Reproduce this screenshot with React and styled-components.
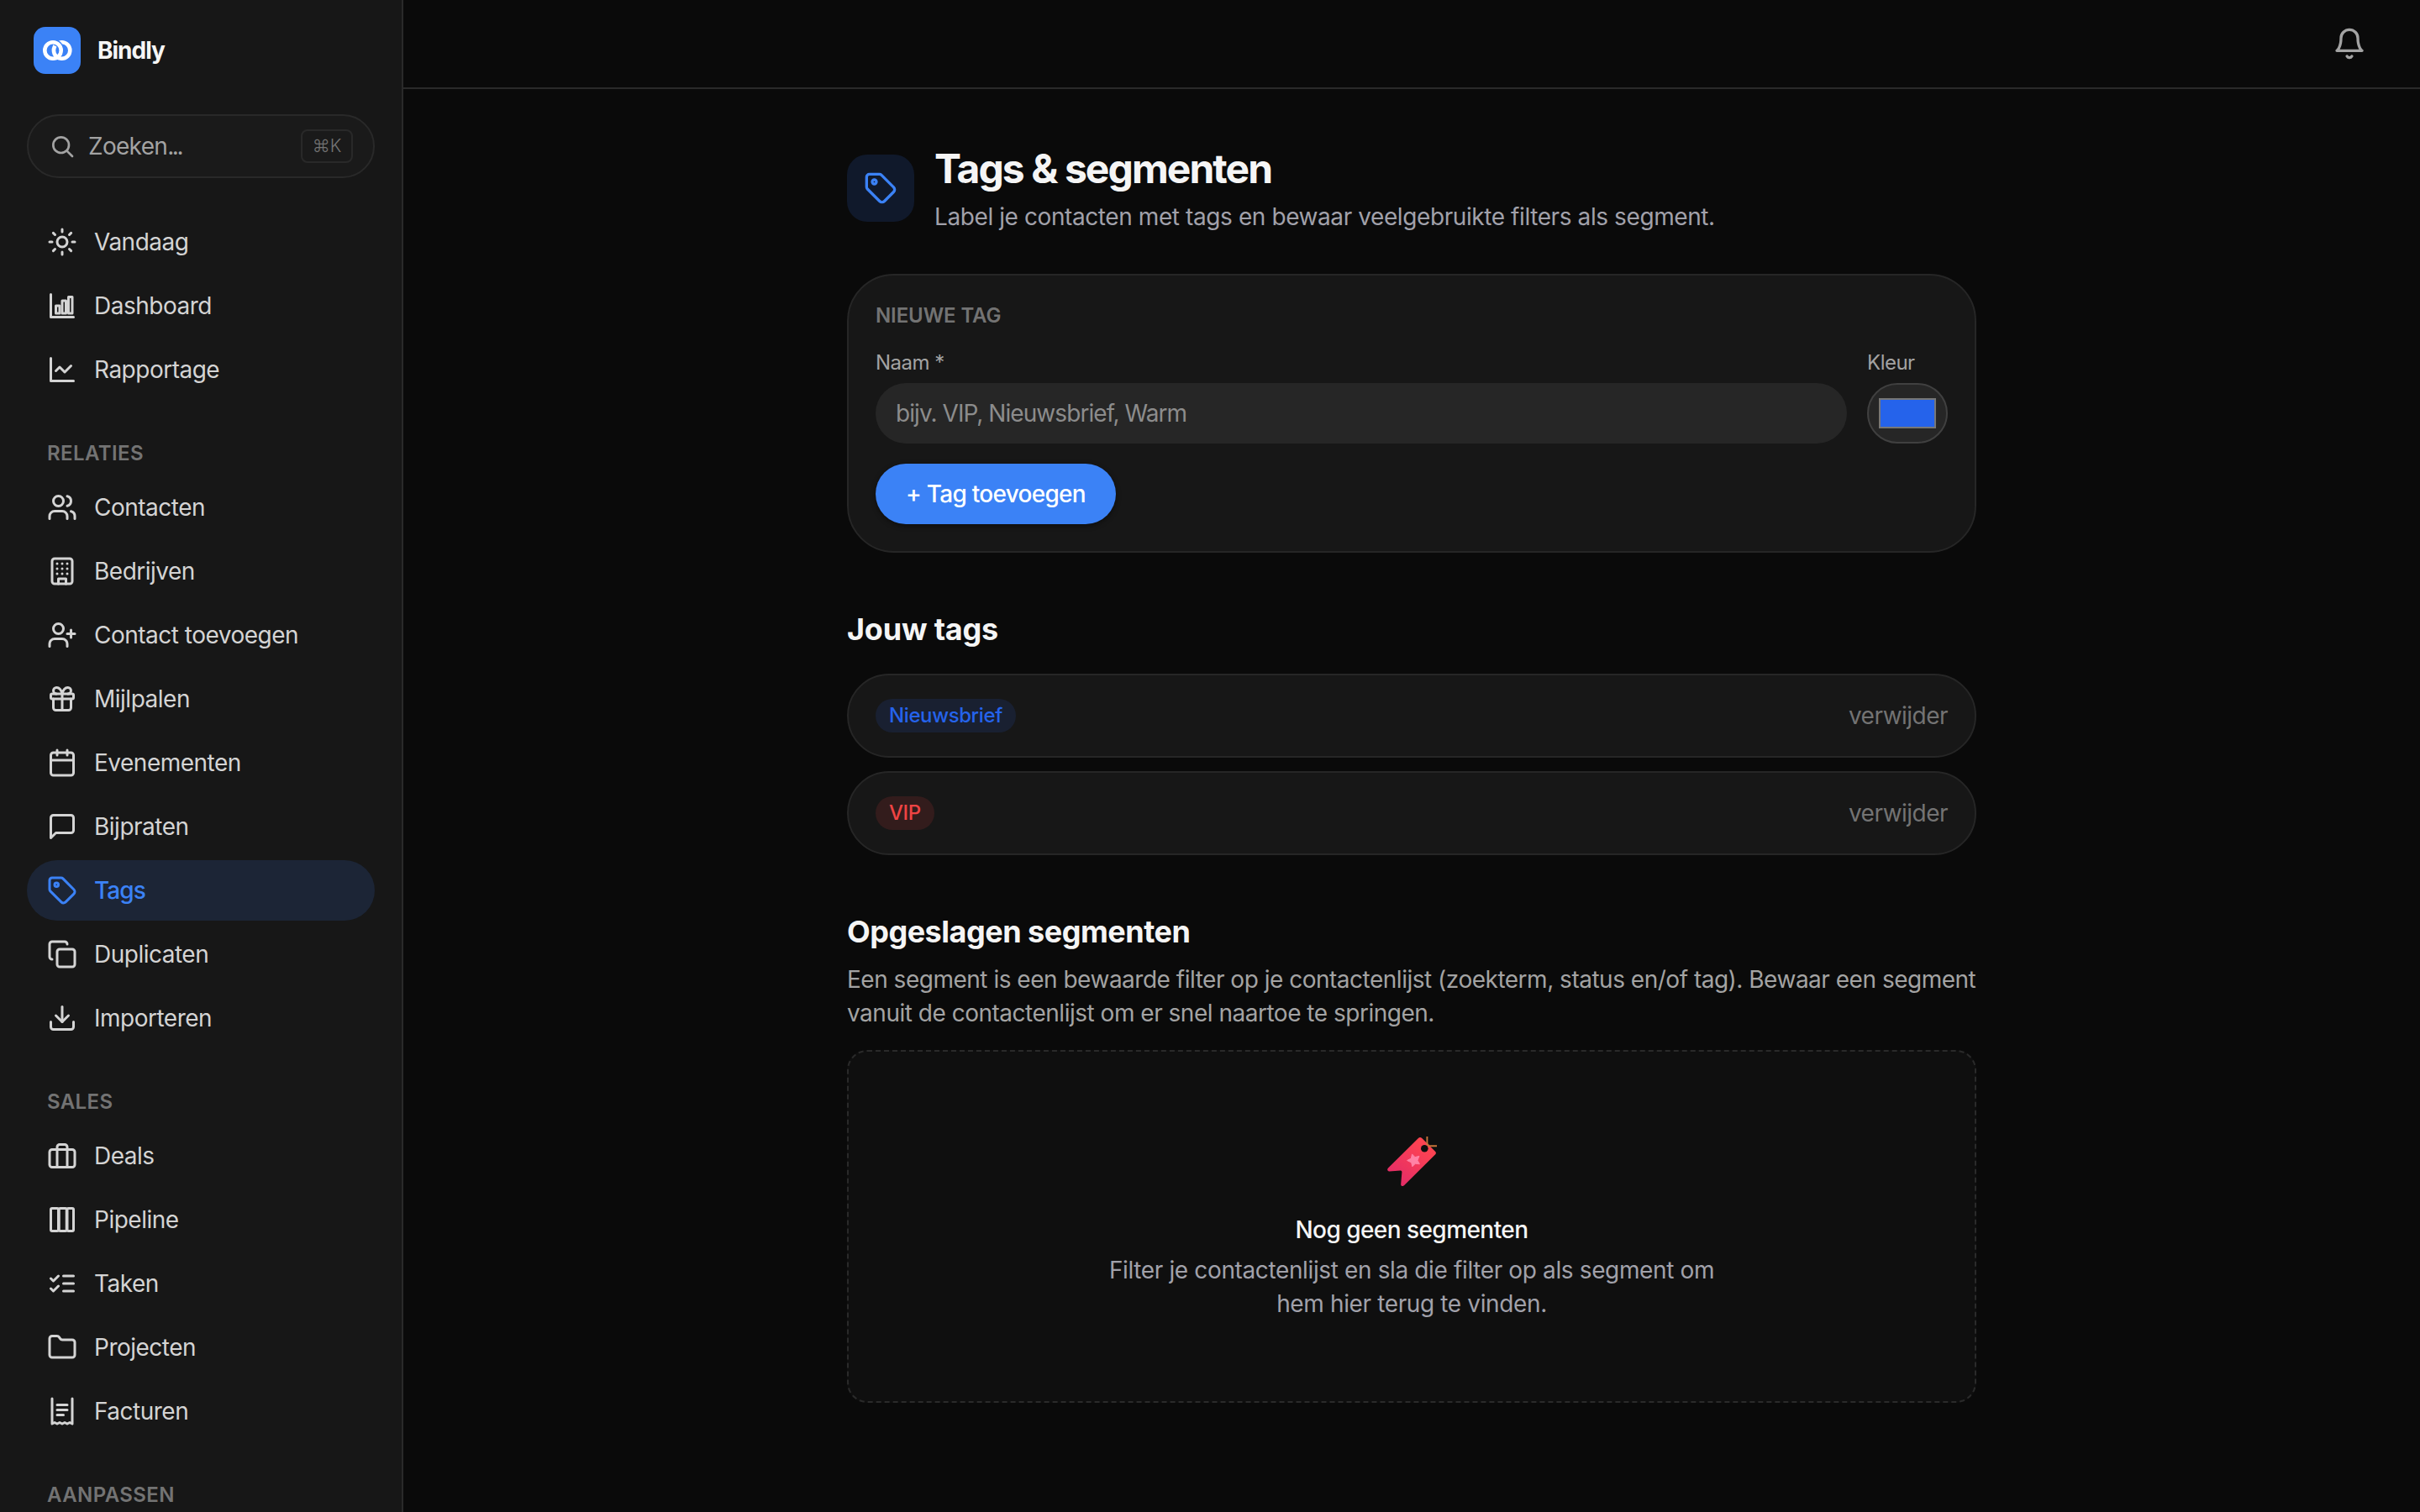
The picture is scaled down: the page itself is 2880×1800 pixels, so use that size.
import React from 'react';
import styled, { createGlobalStyle } from 'styled-components';
import { Users, UserPlus, Gift, Calendar, Copy, Download, Folder } from 'lucide-react';

const GlobalStyle = createGlobalStyle`
  * {
    box-sizing: border-box;
  }
  body {
    margin: 0;
    background: #0a0a0a;
    color: #f5f5f5;
    font-family: Inter, sans-serif;
    font-size: 28px;
    line-height: 40px;
    letter-spacing: -0.46px;
  }
  h1, h2, p {
    margin: 0;
  }
  button, input {
    font: inherit;
    letter-spacing: inherit;
  }
`;

const Layout = styled.div`
  display: flex;
  height: 1800px;
  overflow: hidden;
`;

const Sidebar = styled.aside`
  width: 480px;
  flex-shrink: 0;
  padding: 32px 32px 0;
  background: #171717;
  border-right: 2px solid #2a2a2a;
  overflow: hidden;
`;

const Brand = styled.div`
  display: flex;
  align-items: center;
  gap: 20px;
  padding-left: 8px;
  height: 56px;
  font-weight: 650;
  letter-spacing: -1px;
`;

const BrandLogo = styled.div`
  width: 56px;
  height: 56px;
  border-radius: 14px;
  background: #3b82f6;
  overflow: hidden;
`;

const SearchButton = styled.button`
  display: flex;
  align-items: center;
  gap: 15px;
  width: 414px;
  height: 76px;
  margin: 48px 0 40px;
  padding: 0 24px;
  background: #1a1a1a;
  border: 2px solid #292929;
  border-radius: 38px;
  color: #a3a3a3;
`;

const SearchLabel = styled.span`
  flex: 1;
  text-align: left;
  letter-spacing: -0.7px;
`;

const Dots = styled.span`
  letter-spacing: -2.4px;
`;

const Kbd = styled.kbd`
  display: flex;
  align-items: center;
  justify-content: center;
  width: 62px;
  height: 40px;
  border: 2px solid #292929;
  border-radius: 8px;
  color: #737373;
  font-family: Inter, sans-serif;
  font-size: 21px;
  font-weight: 300;
  letter-spacing: 0;
`;

const Nav = styled.nav`
  display: flex;
  flex-direction: column;
  gap: 4px;
  width: 414px;
`;

const NavHeading = styled.div`
  height: 92px;
  padding: 48px 24px 12px;
  color: #737373;
  font-size: 24px;
  font-weight: 600;
  line-height: 32px;
  letter-spacing: 0.4px;
`;

const NavItem = styled.a`
  display: flex;
  align-items: center;
  gap: 20px;
  height: 72px;
  padding: 0 24px;
  border-radius: 36px;
  background: ${p => (p.$active ? '#1c2536' : 'transparent')};
  color: ${p => (p.$active ? '#3b82f6' : '#d4d4d4')};
  font-weight: ${p => (p.$active ? 500 : 400)};
  letter-spacing: ${p => (p.$active ? '-0.9px' : '-0.5px')};
`;

const Main = styled.main`
  flex: 1;
  display: flex;
  flex-direction: column;
`;

const Topbar = styled.header`
  display: flex;
  align-items: center;
  justify-content: flex-end;
  height: 106px;
  padding-right: 64px;
  border-bottom: 2px solid #2a2a2a;
  color: #a3a3a3;
`;

const Content = styled.div`
  width: 1344px;
  margin: 0 auto;
  padding-top: 64px;
`;

const PageHeader = styled.div`
  display: flex;
  align-items: center;
  gap: 24px;
  margin-bottom: 48px;
`;

const PageIcon = styled.div`
  display: flex;
  align-items: center;
  justify-content: center;
  width: 80px;
  height: 80px;
  border-radius: 24px;
  background: #10192b;
  color: #3b82f6;
`;

const PageTitle = styled.h1`
  margin-bottom: 6px;
  font-size: 48px;
  font-weight: 650;
  line-height: 62px;
  letter-spacing: -1.95px;
`;

const Muted = styled.p`
  color: ${p => (p.$cool ? '#a1a1aa' : '#a3a3a3')};
  letter-spacing: ${p => p.$tracking || '-0.41px'};
  white-space: nowrap;
`;

const Card = styled.section`
  padding: 32px;
  border: 2px solid #262626;
  border-radius: 56px;
  background: #171717;
`;

const CardHeading = styled.div`
  margin-bottom: 24px;
  color: #737373;
  font-size: 24px;
  font-weight: 600;
  line-height: 32px;
  letter-spacing: -0.1px;
`;

const FormRow = styled.div`
  display: flex;
  gap: 24px;
  margin-bottom: 24px;
`;

const Field = styled.label`
  display: flex;
  flex-direction: column;
  gap: 8px;
  flex: ${p => (p.$grow ? 1 : 'none')};
  color: #a3a3a3;
  font-size: 24px;
  line-height: 32px;
  letter-spacing: -0.5px;
`;

const TextInput = styled.input`
  height: 72px;
  padding: 0 24px;
  border: 0;
  border-radius: 36px;
  background: #262626;
  color: #f5f5f5;
  font-size: 28px;
  letter-spacing: -0.94px;
  &::placeholder {
    color: #8c8c8c;
    opacity: 1;
  }
`;

const ColorInput = styled.span`
  display: flex;
  align-items: center;
  justify-content: center;
  width: 96px;
  height: 72px;
  border: 2px solid #404040;
  border-radius: 36px;
  background: #262626;
`;

const Swatch = styled.span`
  width: 68px;
  height: 36px;
  border: 2px solid #777777;
  background: #2563eb;
`;

const AddButton = styled.button`
  display: block;
  width: 286px;
  height: 72px;
  padding: 0;
  border: 0;
  border-radius: 36px;
  background: #3b82f6;
  box-shadow: 0 2px 6px rgba(0, 0, 0, 0.45);
  color: #fff;
  font-weight: 550;
  letter-spacing: -0.72px;
  white-space: nowrap;
`;

const SectionTitle = styled.h2`
  margin: 64px 0 ${p => p.$space}px;
  font-size: 36px;
  font-weight: 650;
  line-height: 54px;
  letter-spacing: ${p => p.$tracking || '-0.5px'};
`;

const TagList = styled.div`
  display: flex;
  flex-direction: column;
  gap: 16px;
`;

const TagRow = styled.div`
  display: flex;
  align-items: center;
  justify-content: space-between;
  height: 100px;
  padding: 0 32px;
  border: 2px solid #262626;
  border-radius: 50px;
  background: #171717;
`;

const Chip = styled.span`
  height: 40px;
  padding: 0 16px;
  border-radius: 20px;
  background: ${p => p.$bg};
  color: ${p => p.$color};
  font-size: 24px;
  font-weight: 500;
  letter-spacing: -0.4px;
`;

const RemoveButton = styled.button`
  padding: 0;
  border: 0;
  background: none;
  color: #737373;
  letter-spacing: -0.52px;
`;

const EmptyState = styled.div`
  display: flex;
  flex-direction: column;
  align-items: center;
  height: 420px;
  margin-top: 24px;
  padding: 96px 0;
  border: 2px dashed #2a2a2a;
  border-radius: 24px;
  background: #0f0f0f;
  text-align: center;
`;

const EmptyArt = styled.div`
  height: 72px;
  padding: 5px 0 0 2px;
  margin-bottom: 24px;
  line-height: 0;
`;

const EmptyTitle = styled.p`
  margin-bottom: 8px;
  font-weight: 550;
  letter-spacing: -0.55px;
`;

const Svg = ({ size = 36, children }) => (
  <svg
    width={size}
    height={size}
    viewBox="0 0 24 24"
    fill="none"
    stroke="currentColor"
    strokeWidth="2"
    strokeLinecap="round"
    strokeLinejoin="round"
  >
    {children}
  </svg>
);

const lucide = Icon => () => <Icon size={36} strokeWidth={2} />;

const SunIcon = () => (
  <Svg>
    <circle cx="12" cy="12" r="4" />
    <path d="M12 2v2M12 20v2M4.93 4.93l1.41 1.41M17.66 17.66l1.41 1.41M2 12h2M20 12h2M6.34 17.66l-1.41 1.41M19.07 4.93l-1.41 1.41" />
  </Svg>
);

const BarsIcon = () => (
  <Svg>
    <path d="M3 3v18h18" />
    <rect x="7" y="12" width="3" height="6" />
    <rect x="12" y="8" width="3" height="10" />
    <rect x="17" y="5" width="3" height="13" />
  </Svg>
);

const TrendIcon = () => (
  <Svg>
    <path d="M3 3v18h18" />
    <path d="m7 13 3-3 4 4 5-5" />
  </Svg>
);

const BuildingIcon = () => (
  <Svg>
    <rect x="4" y="2" width="16" height="20" rx="2" />
    <path d="M9 22v-4h6v4" />
    <path d="M8 6h.01M12 6h.01M16 6h.01M8 10h.01M12 10h.01M16 10h.01M8 14h.01M12 14h.01M16 14h.01" />
  </Svg>
);

const MessageIcon = () => (
  <Svg>
    <path d="M21 15a2 2 0 0 1-2 2H7l-4 4V5a2 2 0 0 1 2-2h14a2 2 0 0 1 2 2z" />
  </Svg>
);

const TagIcon = ({ size }) => (
  <Svg size={size}>
    <path d="M12.586 2.586A2 2 0 0 0 11.172 2H4a2 2 0 0 0-2 2v7.172a2 2 0 0 0 .586 1.414l8.704 8.704a2.426 2.426 0 0 0 3.42 0l6.58-6.58a2.426 2.426 0 0 0 0-3.42z" />
    <circle cx="7.5" cy="7.5" r="1.5" />
  </Svg>
);

const BriefcaseIcon = () => (
  <Svg>
    <rect x="2" y="7" width="20" height="14" rx="2" />
    <path d="M16 21V5a2 2 0 0 0-2-2h-4a2 2 0 0 0-2 2v16" />
  </Svg>
);

const ColumnsIcon = () => (
  <Svg>
    <rect x="3" y="3" width="6" height="18" rx="1" />
    <rect x="9.5" y="3" width="6" height="18" rx="1" />
    <rect x="16" y="3" width="5" height="18" rx="1" />
  </Svg>
);

const ChecksIcon = () => (
  <Svg>
    <path d="m3 8 2 2 4-4M3 16l2 2 4-4M13 6h8M13 12h8M13 18h8" />
  </Svg>
);

const InvoiceIcon = () => (
  <Svg>
    <path d="M4 2v20l2-1 2 1 2-1 2 1 2-1 2 1 2-1 2 1V2" />
    <path d="M8 7h8M8 11h8M8 15h5" />
  </Svg>
);

const SearchIcon = () => (
  <Svg size={32}>
    <circle cx="11" cy="11" r="7" />
    <path d="m21 21-4.8-4.8" />
  </Svg>
);

const BellIcon = () => (
  <Svg size={40}>
    <path d="M6 8a6 6 0 0 1 12 0c0 7 3 9 3 9H3s3-2 3-9" />
    <path d="M10.3 21a1.94 1.94 0 0 0 3.4 0" />
  </Svg>
);

// two linked rings, the left one passes over the right one at the top
const Logo = () => (
  <BrandLogo>
    <svg width="56" height="56" viewBox="0 0 56 56" fill="none">
      <circle cx="33.6" cy="28" r="9.7" stroke="#fff" strokeWidth="4.6" />
      <path d="M24.7 18.4A9.7 9.7 0 0 1 32.4 26" stroke="#3b82f6" strokeWidth="7.4" />
      <circle cx="23" cy="28" r="9.7" stroke="#fff" strokeWidth="4.6" />
    </svg>
  </BrandLogo>
);

const BookmarkArt = () => (
  <svg width="60" height="60" viewBox="0 0 60 60" fill="none">
    <defs>
      <linearGradient id="ribbon" x1="48" y1="8" x2="12" y2="52" gradientUnits="userSpaceOnUse">
        <stop stopColor="#ff4550" />
        <stop offset="1" stopColor="#e52d66" />
      </linearGradient>
    </defs>
    <path
      d="M37.2 1.7 1 37.4C-.7 39.2.3 41.6 2.6 41.4L15.6 40.6Q17.6 40.5 17.4 42.5L16.2 56.6C16 59 18.4 59.8 20.2 58.1L57.2 21.3Q58.6 19.6 57.2 18L41 1.8Q39 .2 37.2 1.7Z"
      fill="url(#ribbon)"
    />
    <circle cx="44.3" cy="14.3" r="4.3" fill="#0f0f0f" />
    <path d="M47.4 0v8.5L49.5 11.2H59" stroke="#c6763a" strokeWidth="1.9" />
    <path
      d="M29.5 20.9 33 24.6 38 23.3 36 28.3 38.4 32.8 33.4 32.2 29.8 35.8 28.7 30.9 23.6 28.5 28.4 26.1Z"
      fill="#ff82a5"
      stroke="#ff82a5"
      strokeLinejoin="round"
    />
  </svg>
);

const groups = [
  {
    items: [
      ['Vandaag', SunIcon],
      ['Dashboard', BarsIcon],
      ['Rapportage', TrendIcon],
    ],
  },
  {
    title: 'RELATIES',
    items: [
      ['Contacten', lucide(Users)],
      ['Bedrijven', BuildingIcon],
      ['Contact toevoegen', lucide(UserPlus)],
      ['Mijlpalen', lucide(Gift)],
      ['Evenementen', lucide(Calendar)],
      ['Bijpraten', MessageIcon],
      ['Tags', TagIcon],
      ['Duplicaten', lucide(Copy)],
      ['Importeren', lucide(Download)],
    ],
  },
  {
    title: 'SALES',
    items: [
      ['Deals', BriefcaseIcon],
      ['Pipeline', ColumnsIcon],
      ['Taken', ChecksIcon],
      ['Projecten', lucide(Folder)],
      ['Facturen', InvoiceIcon],
    ],
  },
  { title: 'AANPASSEN', items: [] },
];

const tags = [
  { name: 'Nieuwsbrief', color: '#2563eb', bg: '#192031' },
  { name: 'VIP', color: '#ef4444', bg: '#331c1c' },
];

const App = () => (
  <Layout>
    <GlobalStyle />
    <Sidebar>
      <Brand>
        <Logo />
        <span>Bindly</span>
      </Brand>
      <SearchButton>
        <SearchIcon />
        <SearchLabel>Zoeken<Dots>...</Dots></SearchLabel>
        <Kbd>⌘K</Kbd>
      </SearchButton>
      {groups.map((group, i) => (
        <React.Fragment key={i}>
          {group.title && <NavHeading>{group.title}</NavHeading>}
          <Nav>
            {group.items.map(([label, Icon]) => (
              <NavItem key={label} $active={label === 'Tags'}>
                <Icon />
                <span>{label}</span>
              </NavItem>
            ))}
          </Nav>
        </React.Fragment>
      ))}
    </Sidebar>
    <Main>
      <Topbar>
        <BellIcon />
      </Topbar>
      <Content>
        <PageHeader>
          <PageIcon>
            <TagIcon size={40} />
          </PageIcon>
          <div>
            <PageTitle>Tags &amp; segmenten</PageTitle>
            <Muted $cool>Label je contacten met tags en bewaar veelgebruikte filters als segment.</Muted>
          </div>
        </PageHeader>

        <Card>
          <CardHeading>NIEUWE TAG</CardHeading>
          <FormRow>
            <Field $grow>
              Naam *
              <TextInput placeholder="bijv. VIP, Nieuwsbrief, Warm" />
            </Field>
            <Field>
              Kleur
              <ColorInput>
                <Swatch />
              </ColorInput>
            </Field>
          </FormRow>
          <AddButton>+ Tag toevoegen</AddButton>
        </Card>

        <SectionTitle $space={26} $tracking="-0.2px">Jouw tags</SectionTitle>
        <TagList>
          {tags.map(tag => (
            <TagRow key={tag.name}>
              <Chip $bg={tag.bg} $color={tag.color}>{tag.name}</Chip>
              <RemoveButton>verwijder</RemoveButton>
            </TagRow>
          ))}
        </TagList>

        <SectionTitle $space={10}>Opgeslagen segmenten</SectionTitle>
        <Muted $tracking="-0.49px">
          Een segment is een bewaarde filter op je contactenlijst (zoekterm, status en/of tag). Bewaar een segment
          <br />
          vanuit de contactenlijst om er snel naartoe te springen.
        </Muted>
        <EmptyState>
          <EmptyArt>
            <BookmarkArt />
          </EmptyArt>
          <EmptyTitle>Nog geen segmenten</EmptyTitle>
          <Muted $cool $tracking="-0.37px">
            Filter je contactenlijst en sla die filter op als segment om
            <br />
            hem hier terug te vinden.
          </Muted>
        </EmptyState>
      </Content>
    </Main>
  </Layout>
);

export default App;
